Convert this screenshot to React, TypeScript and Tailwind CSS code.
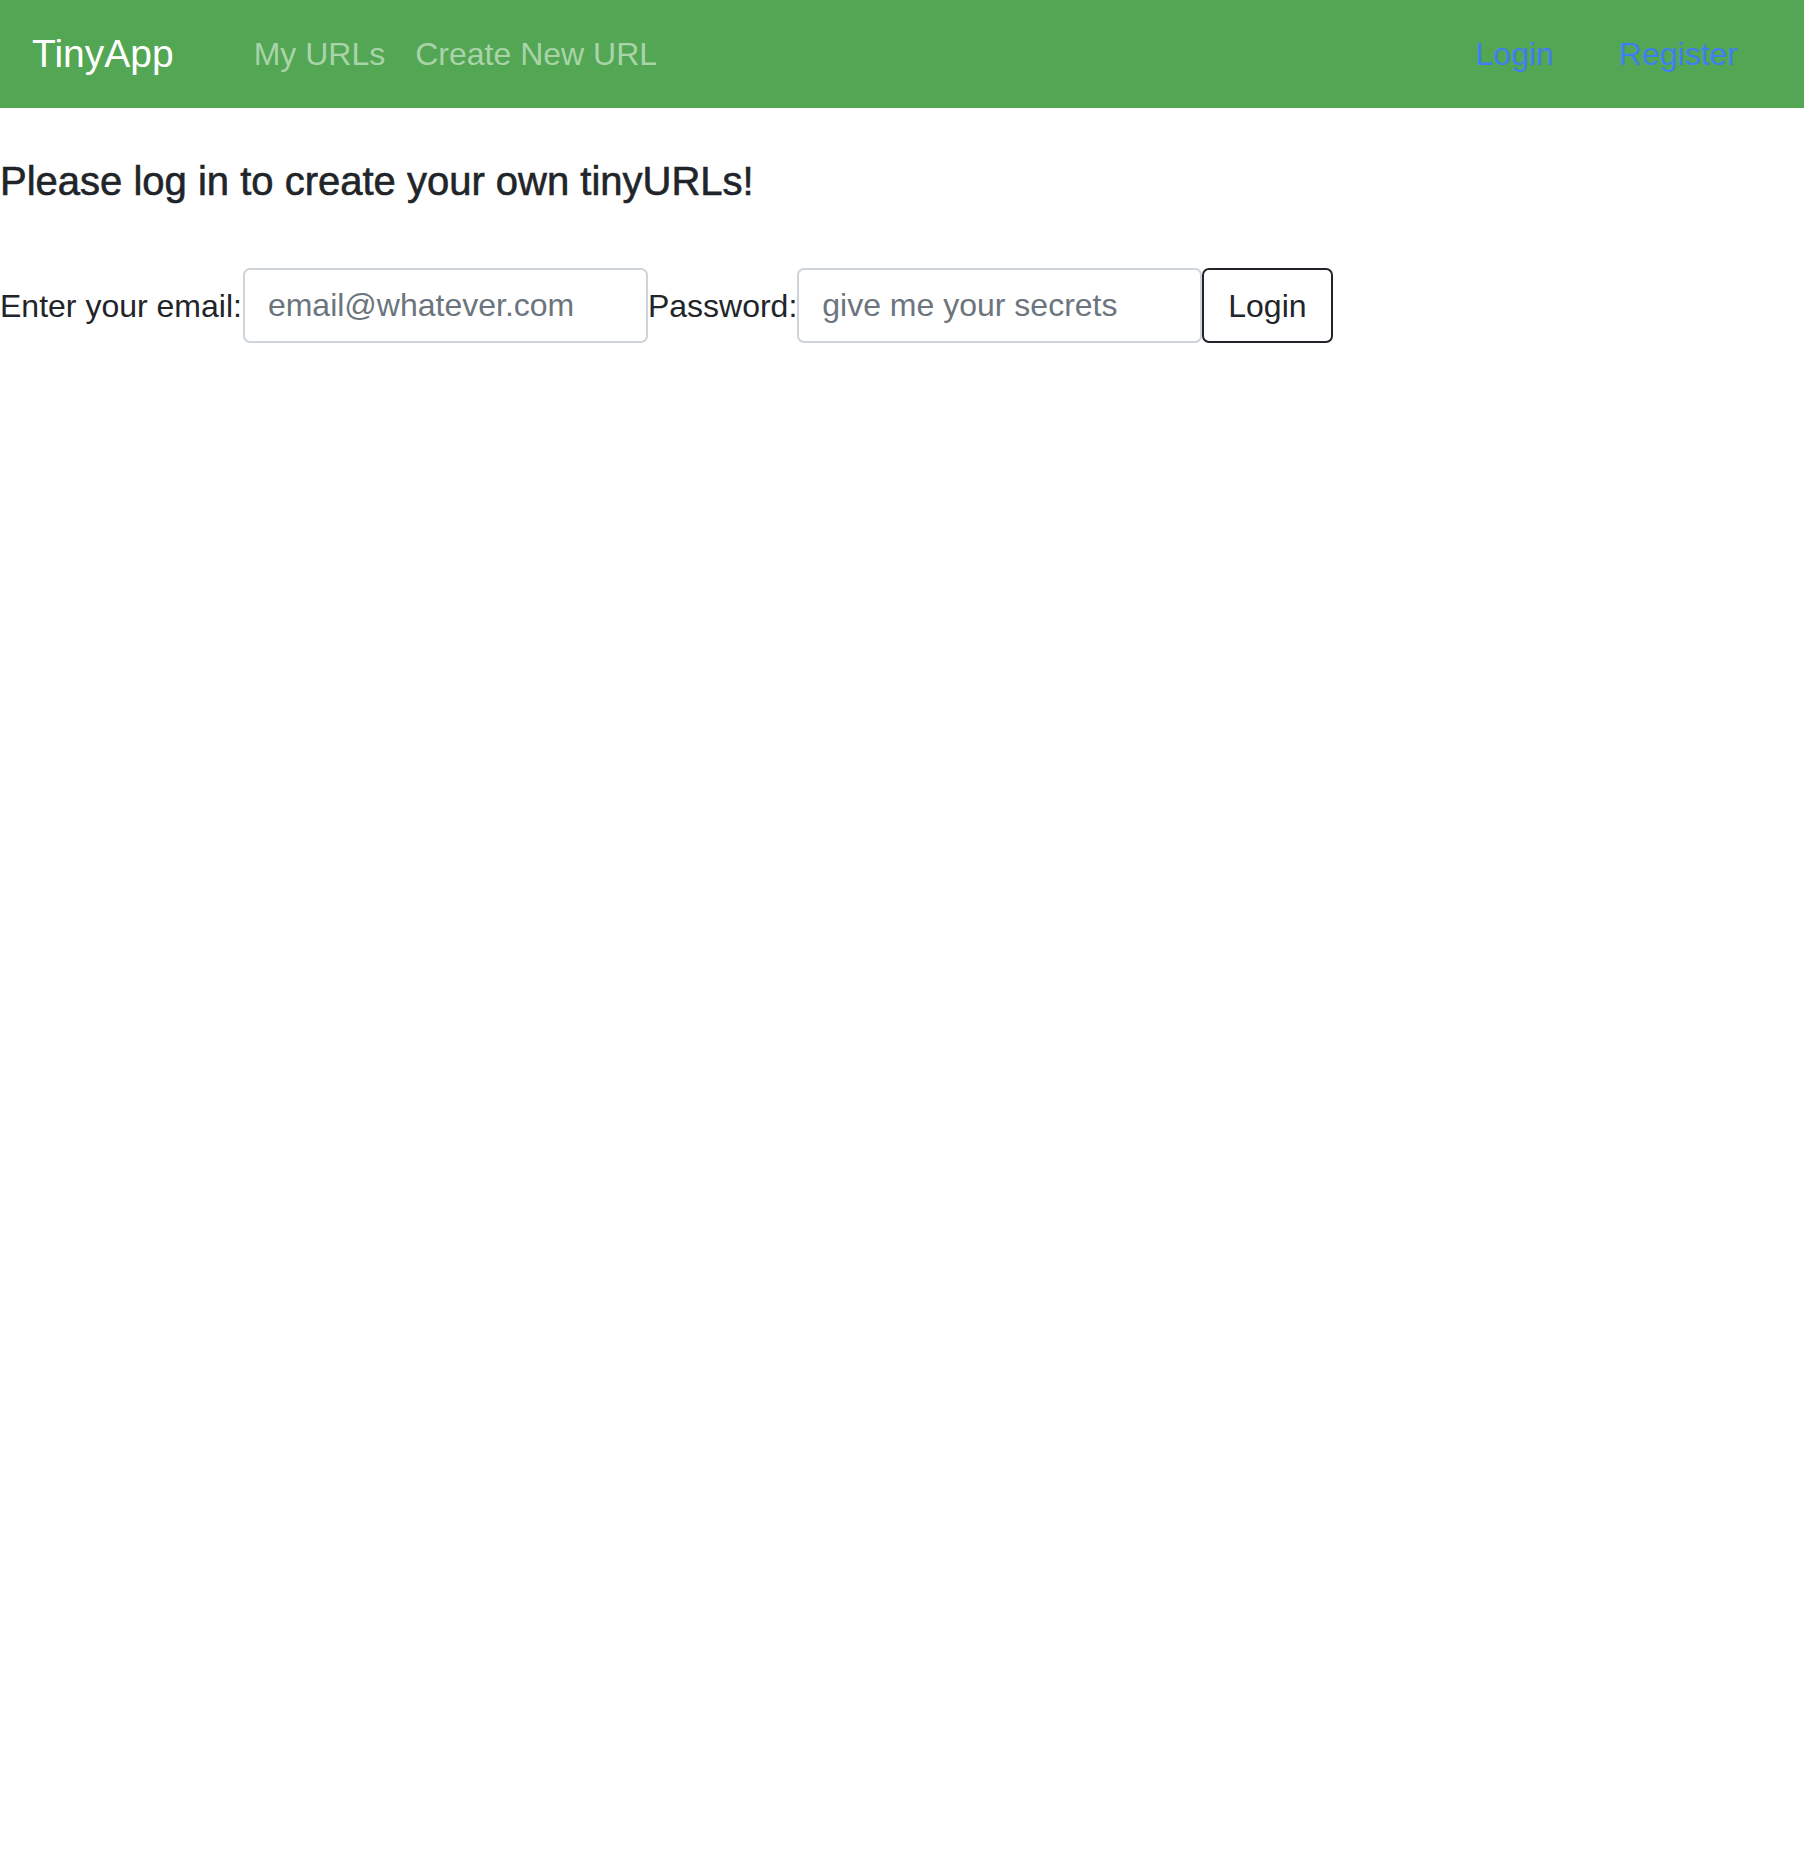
export default function App() {
  return (
    <div className="min-h-screen bg-white text-[#212529] font-['Liberation_Sans',Arial,sans-serif]">
      <nav className="h-[108px] bg-[#53a653] flex items-center">
        <a className="ml-[32px] text-[39px] leading-[48px] text-white">TinyApp</a>
        <div className="ml-[80px] flex gap-[30px] text-[32px] leading-[48px] text-[#a9d3a8]">
          <a>My URLs</a>
          <a>Create New URL</a>
        </div>
        <div className="ml-auto mr-[66px] flex gap-[65px] text-[32px] leading-[48px] text-[#3e7ff0]">
          <a>Login</a>
          <a>Register</a>
        </div>
      </nav>

      <h3 className="mt-[49px] text-[40px] leading-[48px] font-normal [-webkit-text-stroke:0.6px_#212529]">
        Please log in to create your own tinyURLs!
      </h3>

      <form className="mt-[63px] flex items-center text-[32px] leading-[48px]">
        <label className="mr-px">Enter your email:</label>
        <input
          type="email"
          placeholder="email@whatever.com"
          className="w-[405px] h-[75px] px-[23px] border-2 border-[#ced4da] rounded-[7px] text-[32px] placeholder:text-[#6c757d] outline-none"
        />
        <label>Password:</label>
        <input
          type="password"
          placeholder="give me your secrets"
          className="w-[405px] h-[75px] px-[23px] border-2 border-[#ced4da] rounded-[7px] text-[32px] placeholder:text-[#6c757d] outline-none"
        />
        <button
          type="button"
          className="h-[75px] px-[24px] border-2 border-[#212529] rounded-[7px] text-[32px] text-[#212529] bg-white"
        >
          Login
        </button>
      </form>
    </div>
  );
}
